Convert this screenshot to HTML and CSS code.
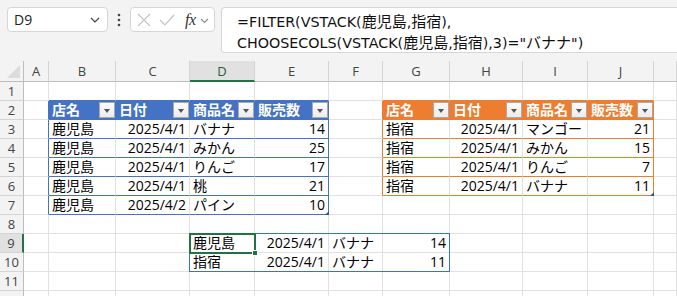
FILE: index.html
```html
<!DOCTYPE html>
<html lang="ja">
<head>
<meta charset="utf-8">
<link rel="stylesheet" href="styles.css">
</head>
<body>
<div class="app">
  <div class="fbar">
    <div class="namebox"><span>D9</span><svg class="chev" width="10" height="6" viewBox="0 0 10 6"><path d="M1 1 L5 5 L9 1" fill="none" stroke="#444" stroke-width="1.2"/></svg></div>
    <svg class="dots" width="4" height="14" viewBox="0 0 4 14"><circle cx="2" cy="2" r="1.3" fill="#444"/><circle cx="2" cy="7" r="1.3" fill="#444"/><circle cx="2" cy="12" r="1.3" fill="#444"/></svg>
    <div class="fxbox">
      <svg width="14" height="14" viewBox="0 0 14 14"><path d="M1 1 L13 13 M13 1 L1 13" stroke="#c4c4c4" stroke-width="1.2" fill="none"/></svg>
      <svg width="16" height="12" viewBox="0 0 16 12"><path d="M1 6 L6 11 L15 1" stroke="#c4c4c4" stroke-width="1.2" fill="none"/></svg>
      <span class="fx">fx</span>
      <svg class="chev2" width="9" height="6" viewBox="0 0 9 6"><path d="M1 1 L4.5 4.5 L8 1" fill="none" stroke="#8a8a8a" stroke-width="1.1"/></svg>
    </div>
    <div class="formula">=FILTER(VSTACK(<span class="j">鹿児島</span>,<span class="j">指宿</span>),<br>CHOOSECOLS(VSTACK(<span class="j">鹿児島</span>,<span class="j">指宿</span>),3)="<span class="j">バナナ</span>")</div>
  </div>

  <div class="sheet">
    <!-- column headers -->
    <div class="corner"><span class="tri"></span></div>
    <div class="ch">A</div><div class="ch">B</div><div class="ch">C</div><div class="ch sel-col">D</div><div class="ch">E</div><div class="ch">F</div><div class="ch">G</div><div class="ch">H</div><div class="ch">I</div><div class="ch">J</div><div class="ch"></div>

    <!-- row 1 -->
    <div class="rh">1</div>
    <div class="c"></div><div class="c bb"></div><div class="c bb"></div><div class="c bb"></div><div class="c bb"></div><div class="c"></div><div class="c bo"></div><div class="c bo"></div><div class="c bo"></div><div class="c bo"></div><div class="c"></div>

    <!-- row 2 -->
    <div class="rh">2</div>
    <div class="c rb"></div>
    <div class="c hb">店名<span class="flt"></span></div>
    <div class="c hb">日付<span class="flt"></span></div>
    <div class="c hb">商品名<span class="flt"></span></div>
    <div class="c hb">販売数<span class="flt"></span></div>
    <div class="c ro"></div>
    <div class="c ho">店名<span class="flt"></span></div>
    <div class="c ho">日付<span class="flt"></span></div>
    <div class="c ho">商品名<span class="flt"></span></div>
    <div class="c ho">販売数<span class="flt"></span></div>
    <div class="c"></div>

    <!-- row 3 -->
    <div class="rh">3</div>
    <div class="c rb"></div>
    <div class="c db">鹿児島</div><div class="c db r">2025/4/1</div><div class="c db">バナナ</div><div class="c db r rb">14</div>
    <div class="c ro"></div>
    <div class="c do">指宿</div><div class="c do r">2025/4/1</div><div class="c do">マンゴー</div><div class="c do r ro">21</div>
    <div class="c"></div>

    <!-- row 4 -->
    <div class="rh">4</div>
    <div class="c rb"></div>
    <div class="c db">鹿児島</div><div class="c db r">2025/4/1</div><div class="c db">みかん</div><div class="c db r rb">25</div>
    <div class="c ro"></div>
    <div class="c do">指宿</div><div class="c do r">2025/4/1</div><div class="c do">みかん</div><div class="c do r ro">15</div>
    <div class="c"></div>

    <!-- row 5 -->
    <div class="rh">5</div>
    <div class="c rb"></div>
    <div class="c db">鹿児島</div><div class="c db r">2025/4/1</div><div class="c db">りんご</div><div class="c db r rb">17</div>
    <div class="c ro"></div>
    <div class="c do">指宿</div><div class="c do r">2025/4/1</div><div class="c do">りんご</div><div class="c do r ro">7</div>
    <div class="c"></div>

    <!-- row 6 -->
    <div class="rh">6</div>
    <div class="c rb"></div>
    <div class="c db">鹿児島</div><div class="c db r">2025/4/1</div><div class="c db">桃</div><div class="c db r rb">21</div>
    <div class="c ro"></div>
    <div class="c do">指宿</div><div class="c do r">2025/4/1</div><div class="c do">バナナ</div><div class="c do r ro end-o">11</div>
    <div class="c"></div>

    <!-- row 7 -->
    <div class="rh">7</div>
    <div class="c rb"></div>
    <div class="c db">鹿児島</div><div class="c db r">2025/4/2</div><div class="c db">パイン</div><div class="c db r rb end-b">10</div>
    <div class="c"></div><div class="c"></div><div class="c"></div><div class="c"></div><div class="c"></div><div class="c"></div>

    <!-- row 8 -->
    <div class="rh">8</div>
    <div class="c"></div><div class="c"></div><div class="c"></div><div class="c"></div><div class="c"></div><div class="c"></div><div class="c"></div><div class="c"></div><div class="c"></div><div class="c"></div><div class="c"></div>

    <!-- row 9 -->
    <div class="rh sel-row">9</div>
    <div class="c"></div><div class="c"></div><div class="c"></div>
    <div class="c active">鹿児島<span class="spill"></span><span class="selbox"><span class="handle"></span></span></div>
    <div class="c r">2025/4/1</div><div class="c">バナナ</div><div class="c r">14</div>
    <div class="c"></div><div class="c"></div><div class="c"></div><div class="c"></div>

    <!-- row 10 -->
    <div class="rh">10</div>
    <div class="c"></div><div class="c"></div><div class="c"></div>
    <div class="c">指宿</div><div class="c r">2025/4/1</div><div class="c">バナナ</div><div class="c r">11</div>
    <div class="c"></div><div class="c"></div><div class="c"></div><div class="c"></div>

    <!-- row 11 -->
    <div class="rh">11</div>
    <div class="c"></div><div class="c"></div><div class="c"></div><div class="c"></div><div class="c"></div><div class="c"></div><div class="c"></div><div class="c"></div><div class="c"></div><div class="c"></div><div class="c"></div>

    <!-- row 12 -->
    <div class="rh">12</div>
    <div class="c"></div><div class="c"></div><div class="c"></div><div class="c"></div><div class="c"></div><div class="c"></div><div class="c"></div><div class="c"></div><div class="c"></div><div class="c"></div><div class="c"></div>
  </div>
</div>
</body>
</html>
```
FILE: styles.css
```css
* { box-sizing: border-box; }
html, body { margin: 0; padding: 0; }
body {
  width: 677px;
  height: 296px;
  overflow: hidden;
  background: #f3f3f3;
  font-family: "Open Sans", "Noto Sans CJK JP", sans-serif;
  color: #000;
}
.app { display: flex; flex-direction: column; }

/* formula bar */
.fbar {
  height: 61px;
  display: flex;
  align-items: flex-start;
  padding: 7px 0 0 7px;
  background: #f3f3f3;
}
.namebox {
  width: 101px;
  height: 25px;
  background: #fff;
  border: 1px solid #d6d6d6;
  border-radius: 4px;
  display: flex;
  align-items: center;
  justify-content: space-between;
  padding: 0 7px 0 6px;
  font-size: 14px;
  color: #222;
}
.namebox .chev { margin-top: 1px; }
.dots { margin: 6px 9px 0 9px; }
.fxbox {
  width: 85px;
  height: 25px;
  background: #fff;
  border: 1px solid #d6d6d6;
  border-radius: 4px;
  display: flex;
  align-items: center;
  padding: 0 0 0 6px;
  gap: 8px;
}
.fx {
  font-family: "Liberation Serif", serif;
  font-style: italic;
  font-size: 16px;
  color: #333;
  margin-left: 2px;
  letter-spacing: -0.5px;
}
.chev2 { margin-left: -4px; margin-top: 2px; }
.formula {
  margin-left: 6px;
  flex: 1;
  height: 46px;
  background: #fff;
  border: 1px solid #d6d6d6;
  border-right: none;
  border-radius: 4px 0 0 4px;
  padding: 3px 0 0 15px;
  font-family: "DejaVu Sans", "Noto Sans CJK JP", sans-serif;
  font-size: 14.3px;
  line-height: 19px;
  color: #111;
  white-space: nowrap;
  overflow: hidden;
}
.formula .j {
  font-family: "Noto Sans CJK JP", sans-serif;
  font-size: 15px;
}

/* sheet grid */
.sheet {
  display: grid;
  grid-template-columns: 24px 25px 67px 74px 65px 74px 54px 67px 73px 65px 66px 1fr;
  grid-template-rows: 21px repeat(12, 19px);
  background: #fff;
  font-size: 14px;
}
.corner {
  background: #f3f3f3;
  border-right: 1px solid #bdbdbd;
  border-bottom: 1px solid #bdbdbd;
  position: relative;
}
.tri {
  position: absolute;
  right: 3px;
  bottom: 3px;
  width: 0; height: 0;
  border-left: 13px solid transparent;
  border-bottom: 13px solid #dcdcdc;
}
.ch {
  background: #f3f3f3;
  border-right: 1px solid #d4d4d4;
  border-bottom: 1px solid #bdbdbd;
  text-align: center;
  font-family: "Open Sans", sans-serif;
  font-size: 13px;
  line-height: 20px;
  color: #444;
}
.ch.sel-col {
  background: #e1e1e1;
  border-bottom: 2px solid #217346;
  color: #1e5e3b;
}
.rh {
  background: #f3f3f3;
  border-right: 1px solid #bdbdbd;
  border-bottom: 1px solid #d4d4d4;
  text-align: center;
  font-family: "Open Sans", sans-serif;
  font-size: 13px;
  line-height: 18px;
  color: #444;
}
.rh.sel-row {
  background: #e1e1e1;
  border-right: 2px solid #217346;
}
.c {
  border-right: 1px solid #e1e1e1;
  border-bottom: 1px solid #e1e1e1;
  padding: 0 3px;
  line-height: 18px;
  white-space: nowrap;
  position: relative;
}
.c.r { text-align: right; }
.c.active { z-index: 5; }

/* blue table */
.bb { border-bottom-color: #4472c4; }
.rb { border-right-color: #4472c4; }
.db { border-bottom-color: #4472c4; }
.hb {
  background: #4472c4;
  color: #fff;
  font-weight: bold;
  border-right-color: #4472c4;
  border-bottom-color: #4472c4;
}
/* orange table */
.bo { border-bottom-color: #ed7d31; }
.ro { border-right-color: #ed7d31; }
.do { border-bottom-color: #ed7d31; }
.ho {
  background: #ed7d31;
  color: #fff;
  font-weight: bold;
  border-right-color: #ed7d31;
  border-bottom-color: #ed7d31;
}

.flt {
  position: absolute;
  right: 0;
  top: 1px;
  width: 16px;
  height: 16px;
  background: linear-gradient(#fbfbfb, #ececec);
  border: 1px solid #a9a9a9;
}
.flt::after {
  content: "";
  position: absolute;
  left: 4px;
  top: 6px;
  border-left: 3.5px solid transparent;
  border-right: 3.5px solid transparent;
  border-top: 4px solid #555;
}

.end-b::after, .end-o::after {
  content: "";
  position: absolute;
  right: -1px;
  bottom: -1px;
  width: 0; height: 0;
  border-left: 4px solid transparent;
  border-bottom: 4px solid #2f5597;
}

/* spill range and selection */
.spill {
  position: absolute;
  left: -1px;
  top: -1px;
  width: 261px;
  height: 39px;
  border: 1px solid #3a70d6;
  pointer-events: none;
}
.selbox {
  position: absolute;
  left: -1px;
  top: -1px;
  width: 67px;
  height: 21px;
  border: 2px solid #217346;
}
.handle {
  position: absolute;
  right: -4px;
  bottom: -4px;
  width: 6px;
  height: 6px;
  background: #217346;
  border: 1px solid #fff;
}
```
